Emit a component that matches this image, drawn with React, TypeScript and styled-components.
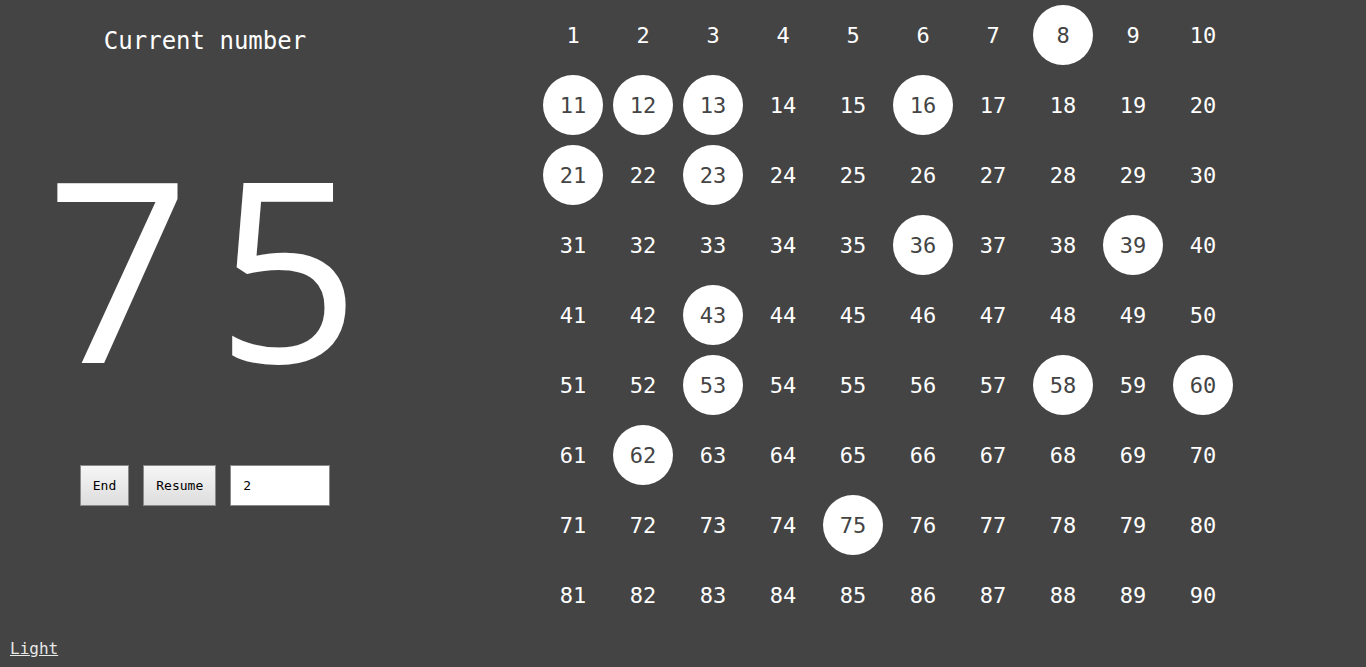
import React from "react";
import styled, { createGlobalStyle } from "styled-components";

const Global = createGlobalStyle`
  html, body { margin: 0; padding: 0; background: #444444; }
  body { font-family: "DejaVu Sans Mono", "Liberation Mono", monospace; color: #ffffff; }
`;

const Page = styled.div`
  position: relative;
  width: 1366px;
  height: 667px;
  display: flex;
  background: #444444;
  overflow: hidden;
`;

const Left = styled.div`
  width: 410px;
  display: flex;
  flex-direction: column;
  align-items: center;
  margin-right: 128px;
`;

const Title = styled.div`
  margin-top: 27px;
  font-size: 24px;
  line-height: 28px;
  color: #ffffff;
`;

const BigNumber = styled.div`
  margin-top: 61px;
  font-family: "Open Sans", sans-serif;
  font-weight: 400;
  font-size: 252px;
  line-height: 300px;
  color: #ffffff;
  letter-spacing: 26px;
  padding-left: 22px;
`;

const Controls = styled.div`
  margin-top: 49px;
  display: flex;
  gap: 14px;
`;

const Button = styled.button`
  height: 41px;
  padding: 0 12px;
  font-family: "DejaVu Sans Mono", monospace;
  font-size: 13px;
  color: #000;
  background: linear-gradient(#f6f6f6, #dddddd);
  border: 1px solid #8a8a8a;
  border-radius: 0;
`;

const Input = styled.input`
  width: 100px;
  height: 41px;
  box-sizing: border-box;
  padding: 0 12px;
  font-family: "DejaVu Sans Mono", monospace;
  font-size: 13px;
  color: #000;
  border: 1px solid #8a8a8a;
  background: #fff;
  outline: none;
`;

const Grid = styled.div`
  display: grid;
  grid-template-columns: repeat(10, 70px);
  grid-auto-rows: 70px;
  align-content: start;
`;

const Cell = styled.div<{ $called: boolean }>`
  display: flex;
  align-items: center;
  justify-content: center;
  margin: 5px;
  border-radius: 50%;
  font-size: 22px;
  background: ${(p) => (p.$called ? "#ffffff" : "transparent")};
  color: ${(p) => (p.$called ? "#444444" : "#ffffff")};
`;

const ThemeLink = styled.a`
  position: absolute;
  left: 10px;
  bottom: 9px;
  font-size: 16px;
  color: #e8e8e8;
  text-decoration: underline;
`;

const called = new Set([8, 11, 12, 13, 16, 21, 23, 36, 39, 43, 53, 58, 60, 62, 75]);

export default function App() {
  const nums = Array.from({ length: 90 }, (_, i) => i + 1);
  return (
    <Page>
      <Global />
      <Left>
        <Title>Current number</Title>
        <BigNumber>75</BigNumber>
        <Controls>
          <Button>End</Button>
          <Button>Resume</Button>
          <Input defaultValue="2" />
        </Controls>
      </Left>
      <Grid>
        {nums.map((n) => (
          <Cell key={n} $called={called.has(n)}>
            {n}
          </Cell>
        ))}
      </Grid>
      <ThemeLink href="#">Light</ThemeLink>
    </Page>
  );
}
